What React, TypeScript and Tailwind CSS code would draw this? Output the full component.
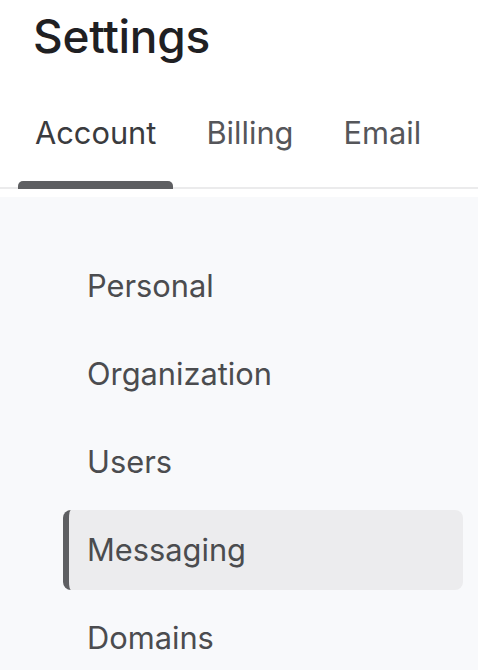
import { useState } from "react";

const tabs = ["Account", "Billing", "Email"];
const sections = ["Personal", "Organization", "Users", "Messaging", "Domains"];

export default function App() {
    const [tab, setTab] = useState("Account");
    const [section, setSection] = useState("Messaging");

    return (
        <div className="min-h-[670px] bg-white font-['Inter',sans-serif] flex flex-col">
            <h1 className="pl-[33px] pt-[10px] text-[46px] leading-[52px] font-medium text-[#1f2023] tracking-[-0.3px]">
                Settings
            </h1>

            {/* Tabs */}
            <div className="mt-[51px] border-b-2 border-[#ebebec] flex pl-[18px] gap-[16px]">
                {tabs.map((t) => (
                    <button
                        key={t}
                        onClick={() => setTab(t)}
                        className={`relative px-[17px] pb-[34px] text-[30.8px] leading-[40px] ${
                            tab === t ? "text-[#3a3b3e]" : "text-[#55565a]"
                        }`}
                    >
                        {t}
                        {tab === t && (
                            <span className="absolute left-0 right-0 -bottom-[2px] h-[8px] rounded-t-[5px] bg-[#5e5f62]" />
                        )}
                    </button>
                ))}
            </div>

            {/* Section nav */}
            <div className="mt-[8px] flex-1 bg-[#f8f9fb] pt-[49px] pl-[63px] pr-[15px]">
                <nav className="flex flex-col gap-[8px]">
                    {sections.map((s) => (
                        <button
                            key={s}
                            onClick={() => setSection(s)}
                            className={`h-[80px] flex items-center text-left rounded-[8px] text-[30.8px] text-[#4b4c4f] ${
                                section === s
                                    ? "bg-[#ececee] border-l-[6px] border-[#5e5f62] pl-[18px]"
                                    : "pl-[24px]"
                            }`}
                        >
                            {s}
                        </button>
                    ))}
                </nav>
            </div>
        </div>
    );
}
